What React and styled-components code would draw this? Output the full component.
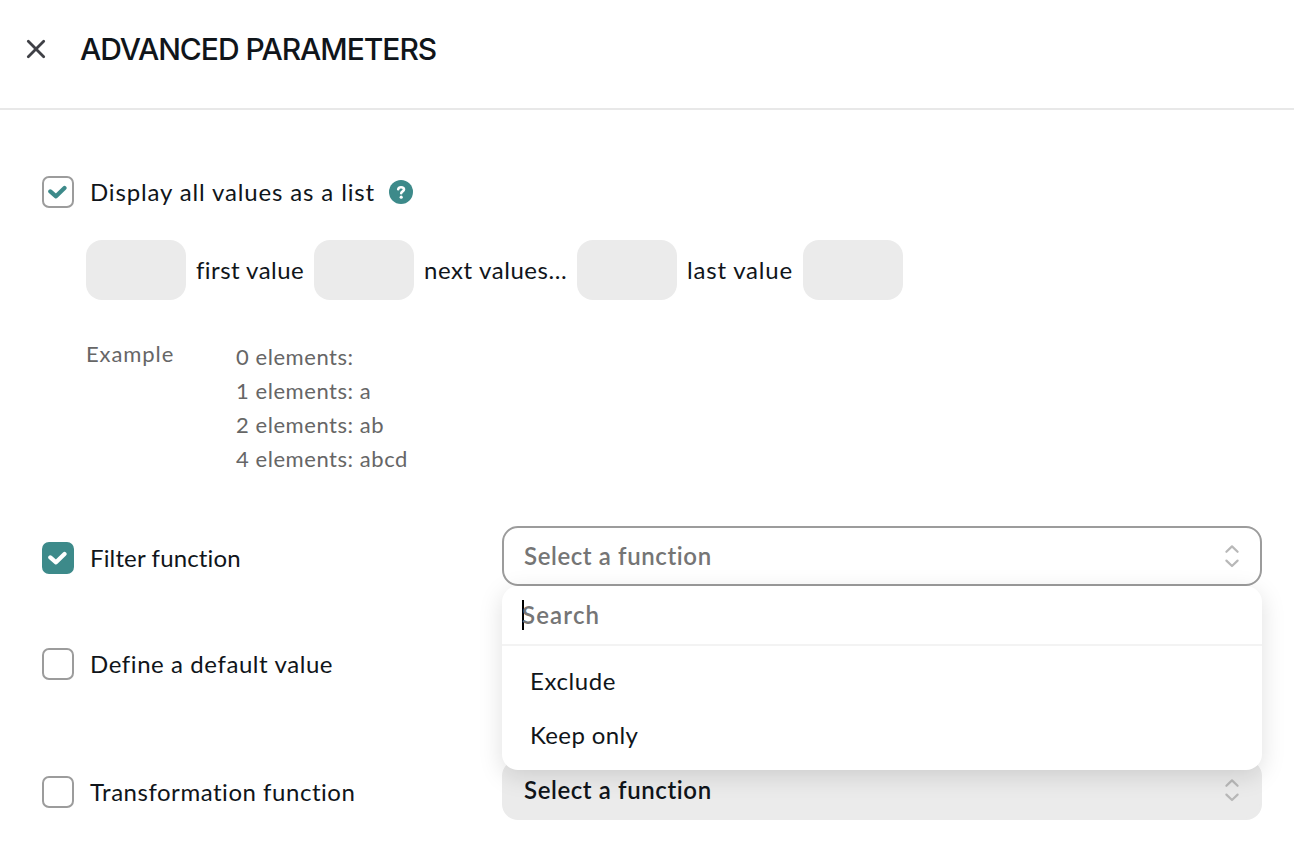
import React from 'react';
import styled, { createGlobalStyle } from 'styled-components';

const colors = {
  ink: '#10151a',
  muted: '#666666',
  placeholder: '#757575',
  teal: '#3d8a8a',
  border: '#9c9c9c',
  fill: '#ebebeb',
  line: '#e8e8e8',
};

const GlobalStyle = createGlobalStyle`
  *, *::before, *::after { box-sizing: border-box; }
  body {
    margin: 0;
    background: #fff;
    color: ${colors.ink};
    font-family: Lato, "Open Sans", sans-serif;
    font-size: 24px;
    line-height: 30px;
    overflow: hidden;
  }
`;

const Panel = styled.div`
  width: 1294px;
  height: 842px;
  display: flex;
  flex-direction: column;
  overflow: hidden;
`;

const Header = styled.header`
  height: 110px;
  flex: none;
  display: flex;
  align-items: flex-start;
  gap: 33px;
  padding: 31px 25px 0;
  border-bottom: 2px solid ${colors.line};
`;

const CloseButton = styled.button`
  width: 22px;
  height: 36px;
  padding: 0;
  border: 0;
  background: none;
  display: flex;
  align-items: center;
`;

const Title = styled.h1`
  margin: 0;
  font: 500 30px/36px Inter, sans-serif;
  letter-spacing: -1.02px;
  white-space: nowrap;
`;

const Body = styled.main`
  display: flex;
  flex-direction: column;
  padding: 66px 32px 0 42px;
`;

const Check = styled.label`
  display: flex;
  align-items: center;
  gap: 16px;
  height: 32px;
`;

const Box = styled.span`
  width: 32px;
  height: 32px;
  flex: none;
  display: flex;
  align-items: center;
  justify-content: center;
  border-radius: 7px;
  border: 2px solid ${p => (p.$filled ? colors.teal : colors.border)};
  background: ${p => (p.$filled ? colors.teal : '#fff')};
  color: ${p => (p.$filled ? '#fff' : colors.teal)};
`;

const Label = styled.span`
  letter-spacing: ${p => p.$track}px;
  white-space: nowrap;
`;

const Help = styled.svg`
  display: block;
  margin-left: -2px;
`;

const Separators = styled.div`
  display: flex;
  align-items: center;
  height: 60px;
  margin: 32px 0 0 44px;
`;

const Slot = styled.span`
  width: 100px;
  height: 60px;
  flex: none;
  border-radius: 16px;
  background: ${colors.fill};
`;

const SlotLabel = styled.span`
  width: ${p => p.$width}px;
  flex: none;
  padding-left: 10px;
  letter-spacing: ${p => p.$track}px;
  white-space: nowrap;
`;

const Example = styled.div`
  display: flex;
  margin: 40px 0 0 44px;
  height: 137px;
  color: ${colors.muted};
  font-size: 22px;
  line-height: 34px;
`;

const ExampleTitle = styled.div`
  width: 150px;
  line-height: 28px;
  letter-spacing: 0.92px;
`;

const ExampleLine = styled.div`
  letter-spacing: 0.55px;
  white-space: nowrap;
`;

const Option = styled.div`
  display: grid;
  grid-template-columns: 460px 760px;
  height: 60px;
  margin-top: ${p => p.$gap}px;

  > ${Check} {
    margin-top: 16px;
  }
`;

const SelectWrap = styled.div`
  position: relative;
`;

const Select = styled.div`
  height: 60px;
  display: flex;
  align-items: center;
  justify-content: space-between;
  padding: 0 20px;
  border: 2px solid ${p => (p.$open ? colors.border : colors.fill)};
  border-radius: 16px;
  background: ${p => (p.$open ? '#fff' : colors.fill)};
  color: ${p => (p.$open ? colors.placeholder : colors.ink)};
  font-weight: 600;
  letter-spacing: 0.6px;
`;

const Menu = styled.div`
  position: absolute;
  z-index: 1;
  top: 60px;
  left: 0;
  width: 760px;
  height: 184px;
  border-radius: 16px;
  background: #fff;
  box-shadow: 0 6px 24px rgba(0, 0, 0, 0.13);
`;

const Search = styled.div`
  height: 60px;
  display: flex;
  align-items: center;
  padding: 0 20px;
  border-bottom: 2px solid #f3f3f3;
  color: ${colors.placeholder};
  font-weight: 600;
  letter-spacing: 1.15px;
`;

const Caret = styled.span`
  width: 2px;
  height: 30px;
  margin-right: -2px;
  background: #000;
`;

const MenuList = styled.div`
  padding-top: 8px;
`;

const MenuItem = styled.div`
  height: 54px;
  padding-left: 28px;
  line-height: 54px;
  letter-spacing: ${p => p.$track}px;
`;

const Tick = () => (
  <svg width="20" height="16" viewBox="0 0 20 16" fill="none" stroke="currentColor" strokeWidth="4.2" strokeLinecap="round" strokeLinejoin="round">
    <path d="M2.3 7.4 8 12.3 16.5 4" />
  </svg>
);

const Chevrons = () => (
  <svg width="16" height="24" viewBox="0 0 16 24" fill="none" stroke="#b8b8b8" strokeWidth="2.2" strokeLinecap="round" strokeLinejoin="round">
    <path d="M2.4 7.8 8 2.4 13.6 7.8M2.4 16.6 8 22 13.6 16.6" />
  </svg>
);

function Checkbox({ label, track, checked, filled, children }) {
  return (
    <Check>
      <Box $filled={filled}>{checked && <Tick />}</Box>
      <Label $track={track}>{label}</Label>
      {children}
    </Check>
  );
}

export default function App() {
  return (
    <Panel>
      <GlobalStyle />
      <Header>
        <CloseButton aria-label="Close">
          <svg width="22" height="22" viewBox="0 0 22 22" fill="none" stroke="#3f4046" strokeWidth="2.8" strokeLinecap="round">
            <path d="M3.3 3.3 18.7 18.7M18.7 3.3 3.3 18.7" />
          </svg>
        </CloseButton>
        <Title>ADVANCED PARAMETERS</Title>
      </Header>
      <Body>
        <Checkbox label="Display all values as a list" track={0.86} checked>
          <Help width="24" height="24" viewBox="0 0 24 24" fill="none">
            <circle cx="12" cy="12" r="12" fill={colors.teal} />
            <path d="M9.2 9.2C9.5 7.9 10.6 7.3 12 7.3c1.8 0 3 .8 3 2.2 0 1.9-2.8 1.8-2.8 3.8" stroke="#fff" strokeWidth="2.6" strokeLinecap="round" />
            <circle cx="12.2" cy="17.2" r="1.6" fill="#fff" />
          </Help>
        </Checkbox>
        <Separators>
          <Slot />
          <SlotLabel $width={128} $track={0.45}>first value</SlotLabel>
          <Slot />
          <SlotLabel $width={163} $track={0.58}>next values...</SlotLabel>
          <Slot />
          <SlotLabel $width={126} $track={0.8}>last value</SlotLabel>
          <Slot />
        </Separators>
        <Example>
          <ExampleTitle>Example</ExampleTitle>
          <div>
            <ExampleLine>0 elements:</ExampleLine>
            <ExampleLine>1 elements: a</ExampleLine>
            <ExampleLine>2 elements: ab</ExampleLine>
            <ExampleLine>4 elements: abcd</ExampleLine>
          </div>
        </Example>
        <Option $gap={49}>
          <Checkbox label="Filter function" track={0.15} checked filled />
          <SelectWrap>
            <Select $open>
              Select a function
              <Chevrons />
            </Select>
            <Menu>
              <Search>
                <Caret />
                Search
              </Search>
              <MenuList>
                <MenuItem $track={0.6}>Exclude</MenuItem>
                <MenuItem $track={0.35}>Keep only</MenuItem>
              </MenuList>
            </Menu>
          </SelectWrap>
        </Option>
        <Option $gap={46}>
          <Checkbox label="Define a default value" track={0.58} />
        </Option>
        <Option $gap={68}>
          <Checkbox label="Transformation function" track={0.53} />
          <Select>
            Select a function
            <Chevrons />
          </Select>
        </Option>
      </Body>
    </Panel>
  );
}
